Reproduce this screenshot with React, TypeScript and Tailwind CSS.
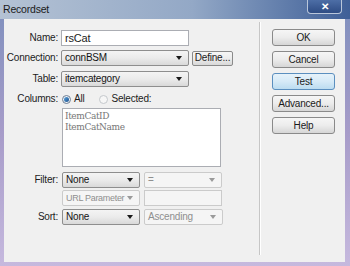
import React from "react";

function Arrow({ disabled }: { disabled?: boolean }) {
  return (
    <span
      className={`ml-auto mr-[6px] h-0 w-0 shrink-0 border-x-[3px] border-t-[4px] border-x-transparent ${
        disabled ? "border-t-[#9a9a9a]" : "border-t-[#1a1a1a]"
      }`}
    />
  );
}

function Select({
  text,
  w,
  disabled,
  tight,
}: {
  text: string;
  w: string;
  disabled?: boolean;
  tight?: boolean;
}) {
  return (
    <div
      className={`flex h-[16px] shrink-0 items-center overflow-hidden rounded-[2px] border pl-[3px] ${w} ${
        disabled
          ? "border-[#cbcbcb] bg-[#f5f5f5] text-[#8f8f8f]"
          : "border-[#8e8e8e] bg-gradient-to-b from-[#f4f4f4] via-[#ebebeb] to-[#d9d9d9] text-[#141414]"
      }`}
    >
      <span className={`whitespace-nowrap leading-none ${tight ? "text-[9px] tracking-[-0.3px]" : ""}`}>
        {text}
      </span>
      <Arrow disabled={disabled} />
    </div>
  );
}

function Btn({ label, focus, w }: { label: string; focus?: boolean; w: string }) {
  return (
    <div
      className={`flex h-[17px] shrink-0 items-center justify-center rounded-[3px] border leading-none ${w} ${
        focus
          ? "border-[#5b8fbf] bg-gradient-to-b from-[#e6f2fa] via-[#d6eaf7] to-[#bcdcf0] text-[#1a1a1a]"
          : "border-[#8a8a8a] bg-gradient-to-b from-[#f6f6f6] via-[#ececec] to-[#d6d6d6] text-[#1a1a1a]"
      }`}
    >
      {label}
    </div>
  );
}

function Label({ text }: { text: string }) {
  return <div className="w-[57px] shrink-0 pr-[3px] text-right leading-none">{text}</div>;
}

export default function App() {
  return (
    <div className="flex h-[266px] w-[350px] flex-col overflow-hidden bg-gradient-to-b from-[#7d8fbd] via-[#a79cc9] to-[#c6b9de] font-['Liberation_Sans',Arial,sans-serif] text-[10px] tracking-[-0.2px] text-[#1c1c1c]">
      {/* title bar */}
      <div className="flex h-[19px] shrink-0 items-start bg-gradient-to-r from-[#b4c2d4] via-[#93a8c6] via-55% to-[#3f5f97]">
        <div className="pl-[3px] pt-[4px] text-[10.5px] leading-none text-[#1b1b1b]">Recordset</div>
        <div className="ml-auto mr-[8px] flex h-[14px] w-[35px] items-center justify-center rounded-b-[4px] border border-t-0 border-[#b9c6da] bg-gradient-to-b from-[#4d6ea6] to-[#2e4c84] text-[10px] font-bold leading-none text-white">
          ✕
        </div>
      </div>

      {/* body */}
      <div className="flex flex-1 px-[4px] pb-[4px] pr-[5px]">
        <div className="flex flex-1 bg-[#f0f0f0]">
          {/* form */}
          <div className="flex w-[255px] flex-col pt-[11px]">
            <div className="flex h-[16px] items-center">
              <Label text="Name:" />
              <div className="flex h-[16px] w-[128px] items-center border border-[#abadb3] bg-white pl-[3px] text-[11px] leading-none">
                rsCat
              </div>
            </div>
            <div className="mt-[4px] flex h-[16px] items-center">
              <Label text="Connection:" />
              <Select text="connBSM" w="w-[128px]" />
              <div className="ml-[3px] flex h-[15px] w-[41px] items-center justify-center rounded-[2px] border border-[#8a8a8a] bg-gradient-to-b from-[#f6f6f6] via-[#ececec] to-[#d8d8d8] leading-none">
                Define...
              </div>
            </div>
            <div className="mt-[5px] flex h-[16px] items-center">
              <Label text="Table:" />
              <Select text="itemcategory" w="w-[128px]" />
            </div>
            <div className="mt-[5px] flex h-[14px] items-center">
              <Label text="Columns:" />
              <div className="ml-[1px] flex h-[9px] w-[9px] items-center justify-center rounded-full border border-[#6f7f94] bg-[#eef2f6]">
                <div className="h-[5px] w-[5px] rounded-full bg-gradient-to-br from-[#5fa6dd] to-[#1b4f8c]" />
              </div>
              <span className="ml-[3px] leading-none">All</span>
              <div className="ml-[14px] h-[9px] w-[9px] rounded-full border border-[#c4c8cc] bg-[#f6f6f6]" />
              <span className="ml-[4px] leading-none">Selected:</span>
            </div>
            <div className="mt-[2px] flex">
              <div className="ml-[58px] h-[59px] w-[159px] border border-[#abadb3] bg-white pl-[2px] pt-[2px] font-['DejaVu_Serif',serif] text-[9px] leading-[11px] tracking-[-0.4px] text-[#777]">
                <div>ItemCatID</div>
                <div>ItemCatName</div>
              </div>
            </div>
            <div className="mt-[5px] flex h-[16px] items-center">
              <Label text="Filter:" />
              <div className="ml-[1px] flex gap-[4px]">
                <Select text="None" w="w-[78px]" />
                <Select text="=" w="w-[78px]" disabled />
              </div>
            </div>
            <div className="mt-[2px] flex h-[16px] items-center">
              <div className="w-[57px] shrink-0" />
              <div className="ml-[1px] flex gap-[4px]">
                <Select text="URL Parameter" w="w-[78px]" disabled tight />
                <div className="h-[16px] w-[78px] border border-[#cbcbcb] bg-[#f5f5f5]" />
              </div>
            </div>
            <div className="mt-[3px] flex h-[16px] items-center">
              <Label text="Sort:" />
              <div className="ml-[1px] flex gap-[4px]">
                <Select text="None" w="w-[78px]" />
                <Select text="Ascending" w="w-[79px]" disabled />
              </div>
            </div>
          </div>

          {/* separator */}
          <div className="mb-[7px] mt-[3px] flex">
            <div className="w-px bg-[#c6c6c6]" />
            <div className="w-px bg-white" />
          </div>

          {/* buttons */}
          <div className="ml-[11px] flex flex-col gap-[5px] pt-[10px]">
            <Btn label="OK" w="w-[63px]" />
            <Btn label="Cancel" w="w-[63px]" />
            <Btn label="Test" w="w-[63px]" focus />
            <Btn label="Advanced..." w="w-[63px]" />
            <Btn label="Help" w="w-[63px]" />
          </div>
        </div>
      </div>
    </div>
  );
}
